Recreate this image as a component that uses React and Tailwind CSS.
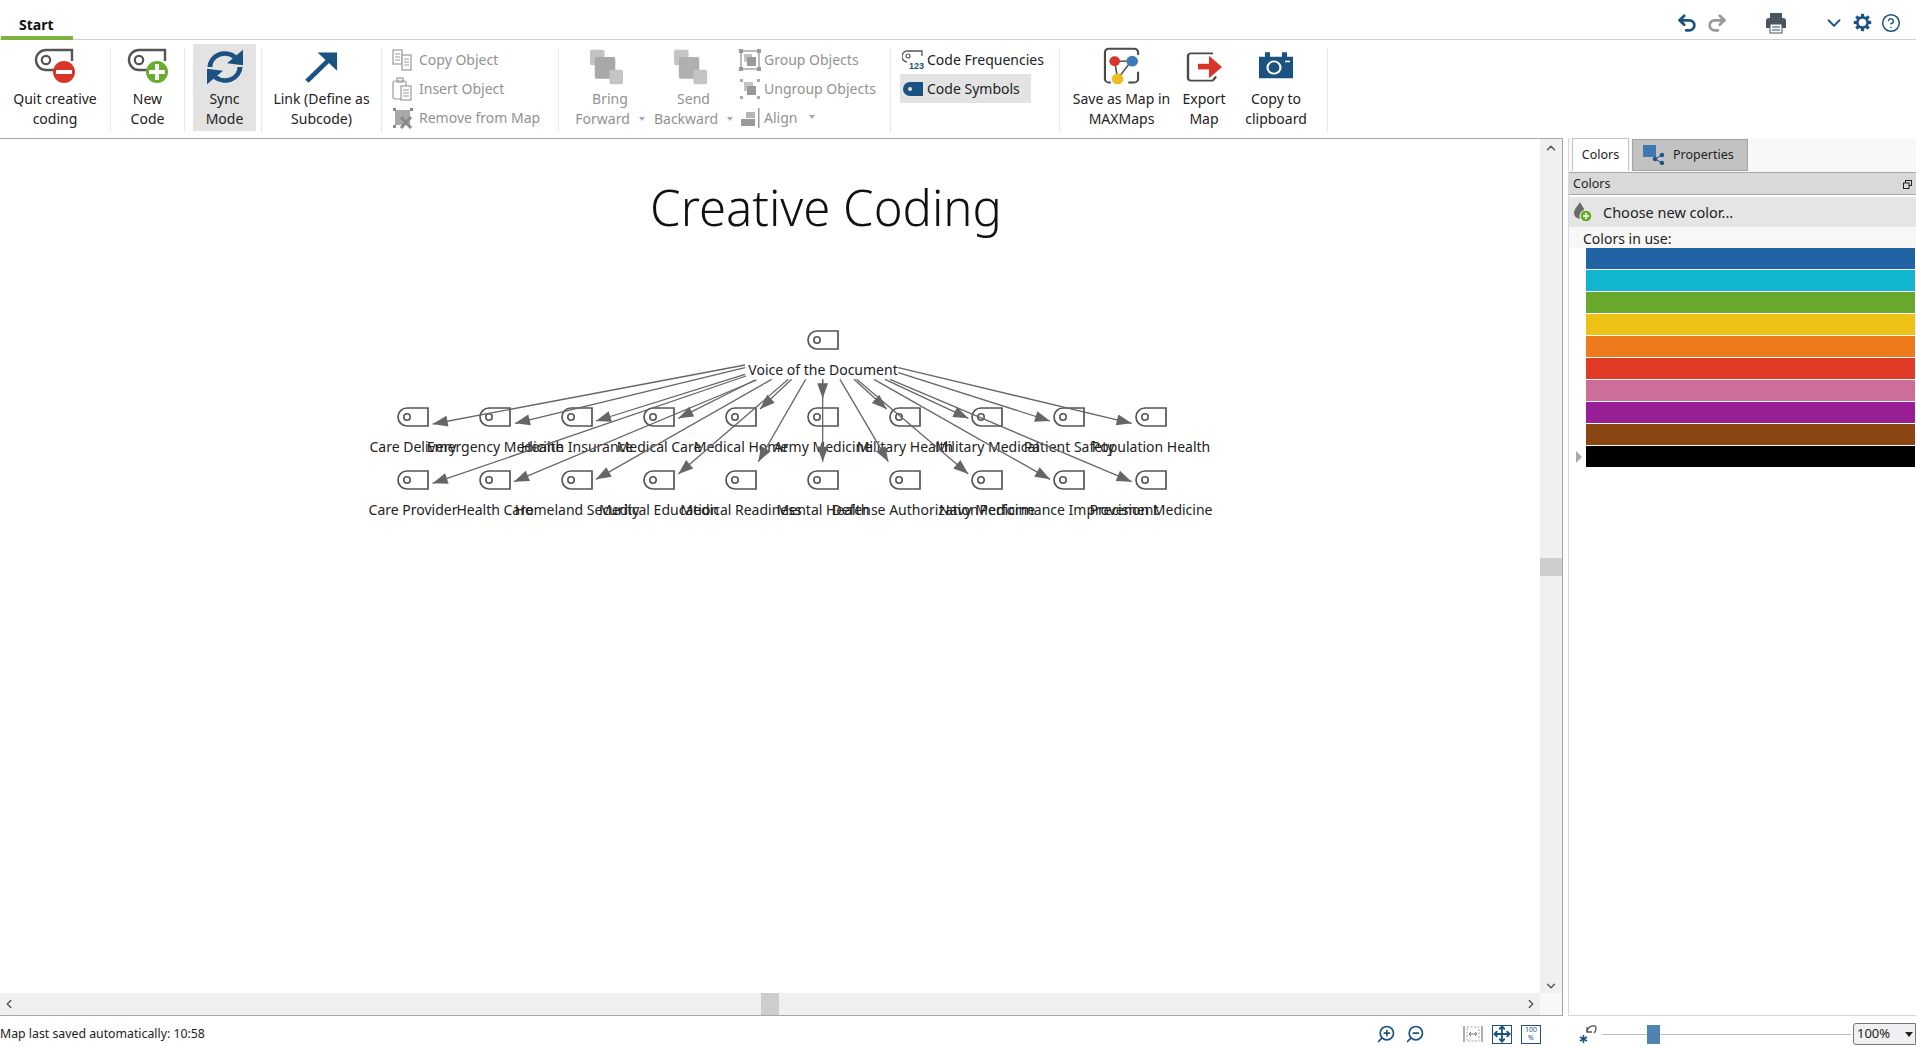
import React from "react";
import { ChevronUp, ChevronDown, ChevronLeft, ChevronRight, Undo2, Redo2, CircleHelp, ZoomIn, ZoomOut, Move } from "lucide-react";

const BLUE = "#1b5281";
const GREY = "#555555";

const QuitIcon = () => (
  <svg width="42" height="40" viewBox="0 0 42 40">
    <path d="M38 14V3H12a10 10 0 0 0 0 20h8" fill="none" stroke={GREY} strokeWidth="2.4" />
    <circle cx="12" cy="13" r="4.2" fill="none" stroke={GREY} strokeWidth="2.2" />
    <circle cx="30" cy="25" r="11" fill="#d8352a" />
    <rect x="22" y="23" width="16" height="4" fill="#fff" />
  </svg>
);
const NewIcon = () => (
  <svg width="42" height="40" viewBox="0 0 42 40">
    <path d="M38 14V3H12a10 10 0 0 0 0 20h8" fill="none" stroke={GREY} strokeWidth="2.4" />
    <circle cx="12" cy="13" r="4.2" fill="none" stroke={GREY} strokeWidth="2.2" />
    <circle cx="30" cy="25" r="11" fill="#69ad2f" />
    <rect x="22" y="23" width="16" height="4" fill="#fff" />
    <rect x="28" y="17" width="4" height="16" fill="#fff" />
  </svg>
);
const SyncIcon = () => (
  <svg width="42" height="40" viewBox="0 0 42 44" preserveAspectRatio="none">
    <path d="M6 22A15 15 0 0 1 31 11" fill="none" stroke={BLUE} strokeWidth="5" />
    <polygon points="39,3 39,20 23,18" fill={BLUE} />
    <path d="M36 22A15 15 0 0 1 11 33" fill="none" stroke={BLUE} strokeWidth="5" />
    <polygon points="3,41 3,24 19,26" fill={BLUE} />
  </svg>
);
const LinkIcon = () => (
  <svg width="35" height="33" viewBox="0 0 36 38" preserveAspectRatio="none">
    <line x1="3" y1="36" x2="26" y2="11" stroke={BLUE} strokeWidth="5" />
    <polygon points="14,3 34,3 34,24" fill={BLUE} />
  </svg>
);
const StackIcon = ({ back, cls }) => (
  <svg width="37" height="38" viewBox="0 0 38 42" preserveAspectRatio="none" className={cls}>
    <rect x="2" y="2" width="15" height="17" rx="2" fill="#c4c4c4" />
    <rect x="7" y="10" width="21" height="24" rx="2" fill={back ? "#b0b0b0" : "#a8a8a8"} />
    <rect x="22" y="24" width="14" height="16" rx="2" fill="#c4c4c4" />
  </svg>
);
const SaveMapIcon = () => (
  <svg width="37" height="39" viewBox="0 0 38 44" preserveAspectRatio="none">
    <path d="M8 40H6a4 4 0 0 1-4-4V6a4 4 0 0 1 4-4h26a4 4 0 0 1 4 4v3M36 28v8a4 4 0 0 1-4 4h-6" fill="none" stroke="#4a4a4a" strokeWidth="2.2" />
    <g stroke="#4a4a4a" strokeWidth="1.6">
      <line x1="12" y1="16" x2="15" y2="36" />
      <line x1="12" y1="16" x2="29" y2="16" />
      <line x1="29" y1="16" x2="15" y2="36" />
    </g>
    <circle cx="12" cy="16" r="5.5" fill="#d8352a" />
    <circle cx="30" cy="16" r="6" fill="#3d7ab5" />
    <circle cx="15" cy="36" r="6" fill="#eebc1d" />
  </svg>
);
const ExportIcon = () => (
  <svg width="38" height="32" viewBox="0 0 38 40" preserveAspectRatio="none">
    <path d="M28 3H6a3 3 0 0 0-3 3v28a3 3 0 0 0 3 3h22M28 37l3-5" fill="none" stroke="#4a4a4a" strokeWidth="2.4" />
    <rect x="13" y="16" width="12" height="7" fill="#d8352a" />
    <polygon points="24,6 37,20 24,34" fill="#d8352a" />
  </svg>
);
const CameraIcon = () => (
  <svg width="36" height="29" viewBox="0 0 36 38" preserveAspectRatio="none" className="mb-[4px]">
    <path d="M1 9h6V3h5v6h12V3h5v6h6v28H1z" fill={BLUE} />
    <ellipse cx="16" cy="23" rx="6.5" ry="8" fill="none" stroke="#fff" strokeWidth="2.2" />
    <rect x="27" y="14" width="5" height="2" fill="#fff" />
  </svg>
);
const CopyIcon = () => (
  <svg width="22" height="22" viewBox="0 0 22 22" fill="none" stroke="#9a9a9a" strokeWidth="1.2">
    <rect x="1" y="1" width="9" height="14" />
    <rect x="10" y="6" width="9" height="15" fill="#fff" />
    <path d="M3 5h5M3 8h5M3 11h5M12 10h5M12 13h5M12 16h5" />
  </svg>
);
const InsertIcon = () => (
  <svg width="22" height="24" viewBox="0 0 22 24" fill="none" stroke="#9a9a9a" strokeWidth="1.2">
    <rect x="1" y="4" width="13" height="18" rx="1.5" />
    <rect x="5" y="1" width="6" height="4" />
    <rect x="9" y="9" width="10" height="14" fill="#fff" />
    <path d="M11 13h6M11 16h6M11 19h6" />
  </svg>
);
const RemoveIcon = () => (
  <svg width="22" height="22" viewBox="0 0 22 22">
    <rect x="3" y="3" width="15" height="15" fill="#a8a8a8" />
    <path d="M1 1h3v3H1zM18 1h3v3h-3zM1 18h3v3H1z" fill="#8a8a8a" />
    <path d="M9 10l10 11M19 10L9 21" stroke="#8a8a8a" strokeWidth="3" />
  </svg>
);
const GroupIcon = () => (
  <svg width="22" height="22" viewBox="0 0 22 22">
    <rect x="2" y="2" width="18" height="18" fill="none" stroke="#a0a0a0" strokeWidth="1.4" />
    <rect x="5" y="5" width="8" height="8" fill="#c4c4c4" />
    <rect x="8" y="8" width="9" height="9" fill="#999" />
    <path d="M0 0h4v4H0zM18 0h4v4h-4zM0 18h4v4H0zM18 18h4v4h-4z" fill="#999" />
  </svg>
);
const UngroupIcon = () => (
  <svg width="22" height="22" viewBox="0 0 22 22">
    <rect x="5" y="4" width="9" height="9" fill="#c4c4c4" />
    <rect x="8" y="8" width="9" height="9" fill="#999" />
    <path d="M1 1h3v3H1zM18 1h3v3h-3zM1 18h3v3H1zM18 18h3v3h-3z" fill="#aaa" />
  </svg>
);
const AlignIcon = () => (
  <svg width="22" height="22" viewBox="0 0 22 22">
    <rect x="7" y="5" width="9" height="6" fill="#b5b5b5" />
    <rect x="2" y="12" width="14" height="7" fill="#9a9a9a" />
    <rect x="19" y="1" width="1.5" height="20" fill="#9a9a9a" />
  </svg>
);
const FreqIcon = () => (
  <svg width="22" height="22" viewBox="0 0 22 22">
    <path d="M20 7V2H6a5.5 5.5 0 0 0-1 11" fill="none" stroke={GREY} strokeWidth="1.3" />
    <circle cx="6" cy="7" r="2" fill="none" stroke={GREY} strokeWidth="1.2" />
    <text x="7" y="20" fontSize="9" fontWeight="700" fill={BLUE} fontFamily="'Liberation Sans', sans-serif">123</text>
  </svg>
);
const SymbolIcon = () => (
  <svg width="20" height="16" viewBox="0 0 20 16">
    <path d="M20 1H7a7 7 0 0 0 0 14h13z" fill={BLUE} />
    <circle cx="7" cy="8" r="2" fill="#e3e3e3" />
  </svg>
);
const PrinterIcon = () => (
  <svg width="22" height="22" viewBox="0 0 22 22">
    <rect x="5" y="1" width="12" height="5" fill="#4a5560" />
    <path d="M1 9a3 3 0 0 1 3-3h14a3 3 0 0 1 3 3v7H1z" fill="#4a5560" />
    <rect x="5" y="12" width="12" height="9" fill="#fff" stroke="#4a5560" strokeWidth="1" />
    <path d="M7 15h8M7 18h8" stroke={BLUE} strokeWidth="1" />
  </svg>
);
const GearIcon = () => (
  <svg width="19" height="19" viewBox="0 0 24 24" stroke={BLUE} fill="none">
    <circle cx="12" cy="12" r="6.5" strokeWidth="3.4" />
    <g strokeWidth="4">
      <line x1="12" y1="1" x2="12" y2="5" />
      <line x1="12" y1="19" x2="12" y2="23" />
      <line x1="1" y1="12" x2="5" y2="12" />
      <line x1="19" y1="12" x2="23" y2="12" />
      <line x1="4.2" y1="4.2" x2="7" y2="7" />
      <line x1="17" y1="17" x2="19.8" y2="19.8" />
      <line x1="4.2" y1="19.8" x2="7" y2="17" />
      <line x1="17" y1="7" x2="19.8" y2="4.2" />
    </g>
  </svg>
);
const PropsIcon = () => (
  <svg width="22" height="20" viewBox="0 0 22 20">
    <rect x="0" y="0" width="13" height="12" fill="#3f78b0" />
    <g fill={BLUE} stroke={BLUE} strokeWidth="1">
      <circle cx="12" cy="14" r="1.8" />
      <circle cx="19" cy="10" r="1.8" />
      <circle cx="19" cy="18" r="1.8" />
      <path d="M12 14l7-4M12 14l7 4" fill="none" />
    </g>
  </svg>
);
const DropIcon = () => (
  <svg width="20" height="22" viewBox="0 0 20 22">
    <path d="M7 1c2 4 5 7 5 11a5.5 5.5 0 0 1-11 0C1 8 5 5 7 1z" fill="#6a6a6a" />
    <circle cx="13" cy="15" r="6" fill="#69ad2f" stroke="#fff" strokeWidth="1" />
    <path d="M10 15h6M13 12v6" stroke="#fff" strokeWidth="1.5" />
  </svg>
);
const FitWidthIcon = () => (
  <svg width="20" height="18" viewBox="0 0 20 18" fill="none" stroke="#9a9a9a">
    <path d="M1 1v16M19 1v16" strokeWidth="1.6" />
    <rect x="4" y="2" width="12" height="14" strokeDasharray="2 1.5" strokeWidth="0.9" />
    <path d="M6 9h8M6 9l2-2M6 9l2 2M14 9l-2-2M14 9l-2 2" strokeWidth="1" stroke="#777" />
  </svg>
);
const ResetIcon = () => (
  <svg width="20" height="20" viewBox="0 0 20 20">
    <path d="M5.5 11v8M2 13l7 4M2 17l7-4" stroke={BLUE} strokeWidth="1.6" />
    <path d="M9 8c0-4 4-7 8-6 2 1 1 5-1 7" fill="none" stroke="#555" strokeWidth="1.3" />
    <path d="M9 3v5h5" fill="none" stroke="#555" strokeWidth="1.3" />
  </svg>
);

const Big = ({ icon, lines, w, cls = "" }) => (
  <div className={`flex flex-col items-center shrink-0 ${w} ${cls}`}>
    <div className="h-[45px] mt-[4px] flex items-center justify-center">{icon}</div>
    <div className="text-center leading-[20px] whitespace-pre">{lines}</div>
  </div>
);
const Small = ({ icon, text, extra, cls = "" }) => (
  <div className={`flex items-center h-[29px] gap-[3px] whitespace-nowrap ${cls}`}>
    <div className="w-[22px] flex justify-center shrink-0">{icon}</div>
    <span>{text}</span>
    {extra}
  </div>
);
const Sep = () => <div className="w-px h-[84px] mt-[8px] bg-[#e9e9e9] shrink-0" />;
const Caret = () => <span className="inline-block ml-[9px] mb-[2px] align-middle w-0 h-0 border-x-[3px] border-x-transparent border-t-[4px] border-t-[#aaaaaa]" />;

const cols = 413;
const row1 = ["Care Delivery", "Emergency Medicine", "Health Insurance", "Medical Care", "Medical Home", "Army Medicine", "Military Health", "Military Medical", "Patient Safety", "Population Health"];
const row2 = ["Care Provider", "Health Care", "Homeland Security", "Medical Education", "Medical Readiness", "Mental Health", "Defense Authorization", "Navy Medicine", "Performance Improvement", "Precision Medicine"];

const a = (x, y) => [360 + x / 3, 320 + y / 3];
const b = (x, y) => [780 + x / 3, 320 + y / 3];
const arrows = [
  [a(1155, 135), a(218, 312)],
  [a(1155, 143), a(465, 310)],
  [a(1155, 163), a(708, 303)],
  [a(1185, 180), a(955, 295)],
  [a(1295, 178), a(1200, 267)],
  [a(1388, 178), a(1388, 235)],
  [a(1158, 168), a(218, 490)],
  [a(1190, 180), a(462, 485)],
  [a(1235, 178), a(708, 478)],
  [a(1285, 178), a(955, 462)],
  [a(1337, 178), a(1195, 425)],
  [a(1388, 178), a(1388, 425)],
  [b(180, 178), b(325, 425)],
  [b(222, 178), b(320, 267)],
  [b(230, 178), b(565, 462)],
  [b(315, 178), b(565, 295)],
  [b(282, 178), b(810, 478)],
  [b(355, 158), b(810, 303)],
  [b(355, 143), b(1055, 310)],
  [b(330, 178), b(1055, 485)],
];

const head = (p, q) => {
  const dx = q[0] - p[0], dy = q[1] - p[1];
  const l = Math.hypot(dx, dy), ux = dx / l, uy = dy / l;
  const bx = q[0] - ux * 15, by = q[1] - uy * 15;
  return `${q[0]},${q[1]} ${bx - uy * 5.5},${by + ux * 5.5} ${bx + uy * 5.5},${by - ux * 5.5}`;
};

const Node = ({ cx, top, label }) => (
  <div className="absolute flex flex-col items-center w-0" style={{ left: cx, top: top - 139 }}>
    <svg width="32" height="20" viewBox="0 0 32 20" className="shrink-0">
      <path d="M31 1H10a9 9 0 0 0 0 18h21z" fill="none" stroke="#555" strokeWidth="1.7" />
      <circle cx="10" cy="10" r="3.2" fill="none" stroke="#555" strokeWidth="1.6" />
    </svg>
    <div className="mt-[10px] leading-[20px] whitespace-nowrap text-[#222]">{label}</div>
  </div>
);

const colors = ["#2064a5", "#12b5cf", "#67a82d", "#eec116", "#ee7a1c", "#e13a26", "#cd6e9a", "#981f95", "#8a4513", "#000000"];

export default function App() {
  return (
    <div className="w-screen h-screen overflow-hidden bg-white flex flex-col text-[14px] text-[#222] font-['Noto_Sans',sans-serif]">
      {/* tab row */}
      <div className="h-[40px] shrink-0 flex border-b border-[#d0d0d0]">
        <div className="w-[72px] h-[40px] ml-px border-b-[4px] border-[#7fb23d] pl-[18px] pt-[15px] font-bold leading-[20px] text-[14px] text-[#111]">Start</div>
        <div className="ml-auto flex items-center mr-[15px] mt-[6px]">
          <Undo2 size={22} color={BLUE} strokeWidth={3} />
          <Redo2 size={22} color="#999" strokeWidth={3} className="ml-[8px]" />
          <div className="ml-[37px]"><PrinterIcon /></div>
          <ChevronDown size={22} color={BLUE} strokeWidth={2} className="ml-[36px]" />
          <div className="ml-[8px]"><GearIcon /></div>
          <CircleHelp size={20} color={BLUE} strokeWidth={1.8} className="ml-[9px]" />
        </div>
      </div>
      {/* ribbon */}
      <div className="h-[98px] shrink-0 flex">
        <Big w="w-[110px]" icon={<QuitIcon />} lines={"Quit creative\ncoding"} />
        <Sep />
        <Big w="w-[73px]" icon={<NewIcon />} lines={"New\nCode"} />
        <Sep />
        <Big w="w-[63px]" cls="ml-[8px] mt-[4px] h-[87px] bg-[#e3e3e3] [&>div:first-child]:mt-0" icon={<SyncIcon />} lines={"Sync\nMode"} />
        <div className="w-[5px] shrink-0" />
        <Sep />
        <Big w="w-[119px]" icon={<LinkIcon />} lines={"Link (Define as\nSubcode)"} />
        <Sep />
        <div className="w-[176px] shrink-0 pl-[3px] pt-[5px] text-[#929292]">
          <Small cls="ml-[7px] gap-[5px]" icon={<CopyIcon />} text="Copy Object" />
          <Small cls="ml-[7px] gap-[5px]" icon={<InsertIcon />} text="Insert Object" />
          <Small cls="ml-[7px] gap-[5px]" icon={<RemoveIcon />} text="Remove from Map" />
        </div>
        <Sep />
        <div className="flex text-[#929292]">
          <Big w="w-[94px]" cls="pl-[8px]" icon={<StackIcon cls="-ml-[7px]" />} lines={<>{"Bring\nForward"}<Caret /></>} />
          <Big w="w-[81px]" icon={<StackIcon back cls="-ml-[6px]" />} lines={<>{"Send\nBackward"}<Caret /></>} />
          <div className="w-[156px] shrink-0 pt-[5px] pl-[5px]">
            <Small icon={<GroupIcon />} text="Group Objects" />
            <Small icon={<UngroupIcon />} text="Ungroup Objects" />
            <Small icon={<AlignIcon />} text="Align" extra={<Caret />} />
          </div>
        </div>
        <Sep />
        <div className="w-[168px] shrink-0 pt-[5px] pl-[9px]">
          <Small cls="w-[131px] gap-[2px] pl-[2px]" icon={<FreqIcon />} text="Code Frequencies" />
          <Small cls="w-[131px] gap-[2px] pl-[2px] bg-[#e3e3e3]" icon={<SymbolIcon />} text="Code Symbols" />
        </div>
        <Sep />
        <Big w="w-[123px]" icon={<SaveMapIcon />} lines={"Save as Map in\nMAXMaps"} />
        <Big w="w-[42px]" icon={<ExportIcon />} lines={"Export\nMap"} />
        <Big w="w-[102px]" icon={<CameraIcon />} lines={"Copy to\nclipboard"} />
        <Sep />
      </div>
      {/* body */}
      <div className="flex-1 flex min-h-0">
        <div className="w-[1563px] shrink-0 flex flex-col border-r border-t border-b border-[#a8a8a8]">
          <div className="flex-1 flex min-h-0">
            <div className="flex-1 relative overflow-hidden">
              <div className="absolute left-[826px] top-[38px] w-0 flex justify-center">
                <div className="text-[49px] leading-[60px] whitespace-nowrap text-[#111] font-light">Creative Coding</div>
              </div>
              {row1.map((l, i) => <Node key={l} cx={cols + 82 * i} top={407} label={l} />)}
              {row2.map((l, i) => <Node key={l} cx={cols + 82 * i} top={470} label={l} />)}
              <Node cx={823} top={330} label="Voice of the Document" />
              <svg className="absolute left-0 top-[-139px] w-[1541px] h-[1000px] pointer-events-none">
                {arrows.map(([p, q], i) => (
                  <g key={i}>
                    <line x1={p[0]} y1={p[1]} x2={q[0]} y2={q[1]} stroke="#666" strokeWidth="1.3" />
                    <polygon points={head(p, q)} fill="#666" />
                  </g>
                ))}
              </svg>
            </div>
            <div className="w-[22px] shrink-0 bg-[#f0f0f0] flex flex-col items-center justify-between pt-[2px]">
              <ChevronUp size={14} color="#555" strokeWidth={2.5} />
              <div className="w-full h-[18px] bg-[#cdcdcd]" />
              <ChevronDown size={14} color="#555" strokeWidth={2.5} />
            </div>
          </div>
          <div className="h-[22px] shrink-0 flex">
            <div className="flex-1 bg-[#f0f0f0] flex items-center justify-between px-[2px]">
              <ChevronLeft size={14} color="#555" strokeWidth={2.5} />
              <div className="w-[18px] h-full bg-[#cdcdcd]" />
              <ChevronRight size={14} color="#555" strokeWidth={2.5} />
            </div>
            <div className="w-[22px] bg-[#f8f8f8]" />
          </div>
        </div>
        <div className="w-[5px] shrink-0" />
        <div className="flex-1 min-w-0 flex flex-col border-l border-b border-[#d8d8d8]">
          <div className="h-[34px] bg-[#f8f8f8] flex pl-[3px] pb-px text-[12.5px] gap-[3px]">
            <div className="w-[57px] bg-white border border-b-0 border-[#c4c4c4] flex items-center justify-center">Colors</div>
            <div className="w-[116px] mt-px bg-[#c2c2c2] border border-[#a4a4a4] flex items-center pl-[10px] gap-[8px]"><PropsIcon />Properties</div>
          </div>
          <div className="h-[23px] bg-[#d9d9d9] border-y border-[#a8a8a8] flex items-center justify-between px-[4px] pt-[2px] text-[12.5px]">
            <span>Colors</span>
            <svg width="9" height="9" viewBox="0 0 9 9" fill="none" stroke="#222"><rect x="2.5" y="0.5" width="6" height="5" /><rect x="0.5" y="3" width="5.5" height="5.5" fill="#d9d9d9" /></svg>
          </div>
          <div className="h-[30px] mt-[2px] bg-[#e5e5e5] flex items-center pl-[4px] gap-[10px] text-[14.5px]"><DropIcon /><span className="pt-[2px]">Choose new color...</span></div>
          <div className="h-[21px] bg-[#f7f7f7] pl-[14px] pt-[2px] leading-[20px] text-[14px]">Colors in use:</div>
          <div className="flex flex-col gap-px pr-px">
            {colors.map((c, i) => (
              <div key={c} className="flex items-center h-[21px]">
                <div className="w-[17px] pl-[7px] shrink-0">
                  {i === 9 && <div className="w-0 h-0 border-y-[6px] border-y-transparent border-l-[6px] border-l-[#aaaaaa]" />}
                </div>
                <div className="flex-1 h-full" style={{ backgroundColor: c }} />
              </div>
            ))}
          </div>
        </div>
      </div>
      {/* status */}
      <div className="h-[31px] shrink-0 flex items-center pt-[5px] text-[12.3px] text-[#222]">
        <span>Map last saved automatically: 10:58</span>
        <div className="ml-auto w-[540px] flex items-center">
          <ZoomIn size={20} color={BLUE} strokeWidth={2} className="-scale-x-100" />
          <ZoomOut size={20} color={BLUE} strokeWidth={2} className="-scale-x-100 ml-[9px]" />
          <div className="ml-[38px]"><FitWidthIcon /></div>
          <div className="ml-[9px] w-[20px] h-[19px] border border-[#1b5281] flex items-center justify-center"><Move size={18} color={BLUE} strokeWidth={2.4} /></div>
          <div className="ml-[9px] w-[20px] h-[19px] border border-[#1b5281] text-[7px] leading-[8px] text-center text-[#1b5281]">100<br />%</div>
          <div className="ml-[37px]"><ResetIcon /></div>
          <div className="relative ml-[4px] w-[249px] h-[19px] flex items-center">
            <div className="w-full h-px bg-[#bdbdbd]" />
            <div className="absolute left-[45px] top-0 w-[13px] h-[19px] bg-[#4f83b0]" />
          </div>
          <div className="ml-[2px] flex-1 h-[22px] border border-[#777] rounded-l-[3px] bg-[#f0f0f0] flex items-center justify-between pl-[3px] pr-[2px] text-[13px]">
            100%
            <span className="w-0 h-0 border-x-[4px] border-x-transparent border-t-[5px] border-t-[#222]" />
          </div>
        </div>
      </div>
    </div>
  );
}
